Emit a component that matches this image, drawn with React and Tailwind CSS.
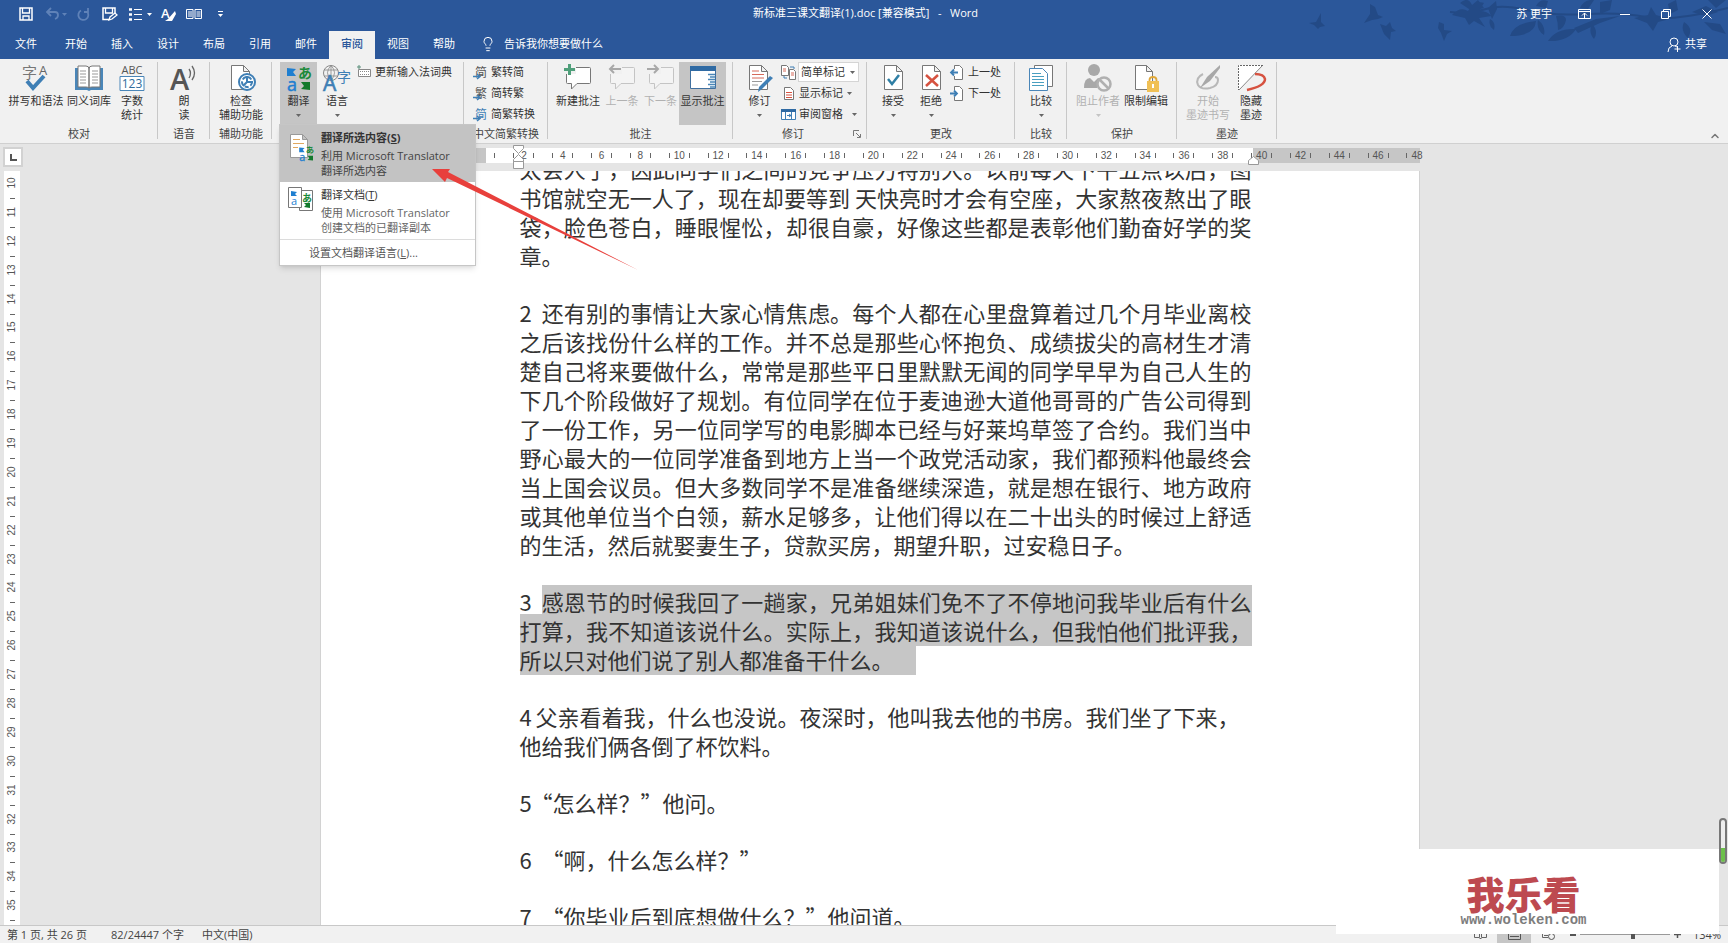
import { ChevronUp, Lightbulb } from 'lucide-react';

const TABS = ['文件', '开始', '插入', '设计', '布局', '引用', '邮件', '审阅', '视图', '帮助'];
const H_MARKS = Array.from({ length: 24 }, (_, i) => (i + 1) * 2);
const V_MARKS = Array.from({ length: 26 }, (_, i) => i + 10);

const Svg = ({ w = 28, h = 28, children, className = '' }) => (
  <svg width={w} height={h} viewBox={`0 0 ${w} ${h}`} fill="none" className={`shrink-0 overflow-visible ${className}`} aria-hidden="true">
    {children}
  </svg>
);

const Caret = ({ className = 'text-[#666]' }) => (
  <Svg w={5} h={3} className={className}>
    <path d="M0 0h5L2.5 3z" fill="currentColor" />
  </Svg>
);

/* ---------- large ribbon icons ---------- */

const SpellIcon = () => (
  <Svg>
    <text x="0" y="14" fontSize="15" fill="#777" fontFamily="Noto Sans CJK SC">字</text>
    <text x="17" y="11" fontSize="13" fill="#666" fontFamily="Open Sans">A</text>
    <path d="M5 17l6 7L22 12" stroke="#3f7fb5" strokeWidth="4" />
  </Svg>
);

const ThesaurusIcon = () => (
  <Svg>
    <path d="M0 4v22h12l2 1 2-1h12V4" fill="#4a86b8" />
    <path d="M3 2h8q3 0 3 3v19q-1-1-3-1H3zM25 2h-8q-3 0-3 3v19q1-1 3-1h8z" fill="#fff" stroke="#777" />
    <path d="M5 7h6M5 10h6M5 13h6M5 16h6M5 19h6M17 7h6M17 10h6M17 13h6M17 16h6M17 19h6" stroke="#999" />
  </Svg>
);

const CountIcon = () => (
  <Svg>
    <text x="14" y="10" fontSize="11" textAnchor="middle" fill="#555" fontFamily="Open Sans">ABC</text>
    <path d="M2 12.5h24v14H2z" fill="#fff" stroke="#4a86b8" />
    <text x="14" y="24" fontSize="12" textAnchor="middle" fill="#2f6c9c" fontFamily="Open Sans">123</text>
  </Svg>
);

const ReadIcon = () => (
  <Svg>
    <text x="0" y="26" fontSize="29" fontWeight="600" fill="#555" fontFamily="Open Sans">A</text>
    <path d="M19 5q3 4 0 9M22 2q5 7 0 14" stroke="#666" strokeWidth="1.3" />
  </Svg>
);

const PageShape = () => <path d="M5.5 1.5h12l6 6v18h-18zM17.5 1.5v6h6" fill="#fff" stroke="#777" />;

const AccessIcon = () => (
  <Svg>
    <path d="M4.5 1.5h12l6 6v18h-18zM16.5 1.5v6h6" fill="#fff" stroke="#777" />
    <circle cx="20" cy="18" r="8" fill="#fff" stroke="#3f7fb5" strokeWidth="2" />
    <circle cx="20" cy="18" r="5" stroke="#3f7fb5" strokeWidth="2" strokeDasharray="4 2" />
    <path d="M20 12v6h6M20 18l-4 4" stroke="#3f7fb5" strokeWidth="2" />
  </Svg>
);

const TranslateGlyph = () => (
  <>
    <path d="M2 4l9 1-3 3 3 4H2z" fill="#1f7fd0" />
    <text x="13" y="14" fontSize="14" fontWeight="700" fill="#1c8a3a" fontFamily="Noto Sans CJK JP">あ</text>
    <text x="2" y="27" fontSize="18" fill="#1f7fd0" stroke="#1f7fd0" strokeWidth="0.5" fontFamily="Open Sans">a</text>
    <path d="M25 26l-9-1 3-3-3-4h9z" fill="#127a2c" />
  </>
);

const TranslateIcon = () => <Svg><TranslateGlyph /></Svg>;

const LanguageIcon = () => (
  <Svg>
    <circle cx="8" cy="9" r="7.5" stroke="#888" />
    <path d="M8 1.5v15M1 6h14M1 12h14M8 1.5q-7 7 0 15M8 1.5q7 7 0 15" stroke="#888" strokeWidth="0.8" />
    <text x="14" y="18" fontSize="14" fill="#3f7fb5" fontFamily="Noto Sans CJK SC">字</text>
    <text x="0" y="27" fontSize="21" fill="#3f7fb5" stroke="#3f7fb5" strokeWidth="0.6" fontFamily="Open Sans">A</text>
  </Svg>
);

const bubble = 'M3.5 3.5h22q1 0 1 1v14q0 1-1 1H13L7.5 25v-5.5h-4q-1 0-1-1v-14q0-1 1-1z';

const NewCommentIcon = () => (
  <Svg>
    <path d={bubble} fill="#fff" stroke="#777" />
    <path d="M0 0h12v10H0z" fill="#f1f1f1" />
    <path d="M5.5 0v11M0 5.5h11" stroke="#4f9f7a" strokeWidth="3" />
  </Svg>
);

const StepCommentIcon = ({ next }) => (
  <Svg>
    <path d={bubble} fill="#f4f4f4" stroke="#c4c4c4" />
    <path d="M0 0h14v10H0z" fill="#f1f1f1" />
    {next
      ? <path d="M0 5h11M7 1l4 4-4 4" stroke="#a8a8a8" strokeWidth="2" />
      : <path d="M13 5H2M6 1L2 5l4 4" stroke="#a8a8a8" strokeWidth="2" />}
  </Svg>
);

const ShowCommentsIcon = () => (
  <Svg>
    <path d="M1.5 2.5h25v22h-25z" fill="#fff" stroke="#3f6f9f" />
    <path d="M1 2h26v5H1z" fill="#2f6aa3" />
    <path d="M19 10.5h7M19 15.5h7M19 20.5h7M21 13h5M21 18h5M21 23h5" stroke="#4a86b8" strokeWidth="1.5" />
  </Svg>
);

const ReviseIcon = () => (
  <Svg>
    <path d="M3.5 1.5h12l6 6v18h-18zM15.5 1.5v6h6" fill="#fff" stroke="#777" />
    <path d="M6 7h7M6 10.5h12M6 14h12" stroke="#d66a5a" />
    <path d="M6 17.5h10M6 21h6" stroke="#999" />
    <path d="M27 14L16 25l-4 3 1-5 11-11z" fill="#3f7fb5" />
  </Svg>
);

const AcceptIcon = () => (
  <Svg>
    <PageShape />
    <path d="M9 15l4 5 7-9" stroke="#2f7fa5" strokeWidth="2.5" />
  </Svg>
);

const RejectIcon = () => (
  <Svg>
    <PageShape />
    <path d="M9 11l12 11M21 11L9 22" stroke="#d65240" strokeWidth="2.5" />
  </Svg>
);

const CompareIcon = () => (
  <Svg>
    <path d="M7.5 1.5h18v21h-18z" fill="#fff" stroke="#777" />
    <path d="M2.5 4.5h13l5 5v17h-18z" fill="#fff" stroke="#4a86b8" />
    <path d="M5 9.5h9M5 12.5h12M5 15.5h12M5 18.5h12M5 21.5h12" stroke="#4a9fc0" />
  </Svg>
);

const BlockIcon = () => (
  <Svg>
    <circle cx="10" cy="6" r="6" fill="#a8a8a8" />
    <path d="M0 24q0-10 6-10l4 4 4-4 3 1-4 9z" fill="#a8a8a8" />
    <circle cx="20" cy="20" r="6.5" fill="#f1f1f1" stroke="#b0b0b0" strokeWidth="2.5" />
    <path d="M16 16l8 8" stroke="#b0b0b0" strokeWidth="2.5" />
  </Svg>
);

const RestrictIcon = () => (
  <Svg>
    <path d="M3.5 1.5h11l6 6v18h-17zM14.5 1.5v6h6" fill="#fff" stroke="#777" />
    <path d="M17.5 18v-2q0-3 3.5-3t3.5 3v2" stroke="#e0a83a" strokeWidth="1.8" />
    <path d="M15 17h12v11H15z" fill="#f0c055" />
    <path d="M21 20v4" stroke="#fff" strokeWidth="2" />
  </Svg>
);

const InkIcon = () => (
  <Svg>
    <path d="M9 10q-8 4-5 11 3 5 12 3 8-2 8-8 0-3-3-3" stroke="#b8b8b8" strokeWidth="2" />
    <path d="M26 1l-13 12-7 11 10-7L26 4z" fill="#a8a8a8" />
  </Svg>
);

const HideInkIcon = () => (
  <Svg>
    <path d="M1 1h25L2 26H1z" fill="#fff" />
    <path d="M26 1.5H1.5V26" stroke="#666" strokeDasharray="2 1" />
    <path d="M25 2L2 26" stroke="#888" />
    <path d="M18 10q9 0 10 5 0 7-18 11" stroke="#d65240" strokeWidth="2.5" />
  </Svg>
);

/* ---------- small ribbon icons ---------- */

const ConvertIcon = ({ char, color = '#555' }) => (
  <Svg w={15} h={15}>
    <text x="2" y="12" fontSize="12" fill={color} fontFamily="Noto Sans CJK SC">{char}</text>
    <path d="M0 11.5h6M4 9l3 2.5L4 14" stroke="#3f7fb5" strokeWidth="1.5" />
  </Svg>
);

const ImeIcon = () => (
  <Svg w={15} h={14}>
    <path d="M1.5 4.5h12v7h-12z" fill="#fff" stroke="#888" />
    <path d="M3 6.5h9M3 9.5h9" stroke="#888" strokeDasharray="1 1" />
    <path d="M2 0v4M0 2h4" stroke="#5a8f7a" />
  </Svg>
);

const MarkupIcon = () => (
  <Svg w={15} h={15}>
    <path d="M.5.5h5l2 2v8h-7zM8.5 4.5h4l2 2v8h-6z" fill="#fff" stroke="#777" />
    <path d="M2 4h3M2 6h3M10 8h3M10 10h3" stroke="#d66a5a" />
    <path d="M9 2h4v2M6 13H3v-2" stroke="#3f7fb5" />
  </Svg>
);

const ShowMarkupIcon = () => (
  <Svg w={15} h={15}>
    <path d="M3.5 1.5h6l3 3v9h-9z" fill="#fff" stroke="#777" />
    <path d="M5 6.5h6M5 9h6M5 11.5h6" stroke="#d65240" />
  </Svg>
);

const PaneIcon = () => (
  <Svg w={15} h={15}>
    <path d="M.5 2.5h14v10H.5z" fill="#fff" stroke="#3f7fb5" />
    <path d="M0 2h15v3H0z" fill="#2f6aa3" />
    <path d="M4.5 5v7M10.5 5v7M6 8.5h4M8 7l2 1.5L8 10" stroke="#3f7fb5" />
  </Svg>
);

const StepChangeIcon = ({ next }) => (
  <Svg w={15} h={15}>
    <path d="M4.5 4V.5h5l3 3v11h-8V11" fill="#fff" stroke="#777" />
    {next
      ? <path d="M0 7.5h7M4 4.5l3 3-3 3" stroke="#3f7fb5" strokeWidth="1.8" />
      : <path d="M8 7.5H1M4 4.5l-3 3 3 3" stroke="#3f7fb5" strokeWidth="1.8" />}
  </Svg>
);

/* ---------- ribbon building blocks ---------- */

const BigButton = ({ icon, lines, width, caret, active, disabled }) => (
  <button
    type="button"
    disabled={disabled}
    className={`${width} flex h-full flex-col items-center whitespace-nowrap pt-[2px] leading-[14px] ${active ? 'bg-[#c5c5c5]' : ''} ${disabled ? 'text-[#b1b1b1]' : ''}`}
  >
    {icon}
    <span className="mt-[2px]">{lines[0]}</span>
    {lines[1] && <span>{lines[1]}</span>}
    {caret && <Caret className={`mt-[6px] ${disabled ? 'text-[#c4c4c4]' : 'text-[#666]'}`} />}
  </button>
);

const SmallButton = ({ icon, label, caret }) => (
  <button type="button" className="flex h-[20px] items-center gap-[3px] whitespace-nowrap">
    {icon}
    <span>{label}</span>
    {caret && <Caret className={caret} />}
  </button>
);

const SmallStack = ({ className = '', children }) => (
  <div className={`flex flex-col items-start gap-px ${className}`}>{children}</div>
);

const Group = ({ label, width, pad = '', children, launcher }) => (
  <section className={`${width} relative flex h-full shrink-0 flex-col pt-[3px]`}>
    <div className={`flex h-[63px] ${pad}`}>{children}</div>
    <div className="mt-[1px] flex h-[16px] items-center">
      <span className="flex-1 whitespace-nowrap text-center text-[#444]">{label}</span>
      {launcher && (
        <button type="button" aria-label="修订选项" className="w-[14px]">
          <Svg w={8} h={8}>
            <path d="M.5 6V.5H6M3 3l4 4M7.5 4v3.5H4" stroke="#777" />
          </Svg>
        </button>
      )}
    </div>
    <span className="absolute right-0 top-[3px] h-[77px] w-px bg-[#c8c8c8]" />
  </section>
);

const TranslateMenu = () => (
  <div role="menu" className="absolute left-[7px] top-[65px] z-20 w-[197px] border border-[#c6c6c6] bg-white text-[#444] shadow-md">
    <button type="button" role="menuitem" className="flex w-full gap-[6px] bg-[#c3c3c3] pb-[4px] pl-[9px] pt-[5px] text-left">
      <Svg w={26} h={28} className="mt-[3px]">
        <path d="M1.5 1.5h12l5 5v18h-17zM13.5 1.5v5h5" fill="#fff" stroke="#999" />
        <path d="M4 6.5h7M4 10.5h11M4 14.5h5" stroke="#e0a860" />
        <g transform="translate(9 12) scale(.6)"><TranslateGlyph /></g>
      </Svg>
      <span className="flex flex-col whitespace-nowrap leading-[15px]">
        <b className="mb-[2px] leading-[16px] text-[#333]">翻译所选内容(<u>S</u>)</b>
        <span>利用 Microsoft Translator</span>
        <span>翻译所选内容</span>
      </span>
    </button>
    <button type="button" role="menuitem" className="mt-[1px] flex w-full gap-[6px] pb-[4px] pl-[7px] pt-[4px] text-left text-[#666]">
      <Svg w={28} h={28}>
        <path d="M12.5 3.5h13v20h-13z" fill="#fff" stroke="#777" />
        <path d="M1.5.5h13v20h-13z" fill="#fff" stroke="#777" />
        <path d="M4 4l6 1-2 2 2 2H4z" fill="#1f7fd0" />
        <text x="4" y="18" fontSize="11" fill="#1f7fd0" fontFamily="Open Sans">a</text>
        <text x="15" y="15" fontSize="10" fontWeight="700" fill="#1c8a3a" fontFamily="Noto Sans CJK JP">あ</text>
        <path d="M23 21l-6-1 2-2-2-2h6z" fill="#127a2c" />
      </Svg>
      <span className="flex flex-col whitespace-nowrap leading-[15px]">
        <span className="mb-[2px] leading-[16px] text-[#333]">翻译文档(<u>T</u>)</span>
        <span>使用 Microsoft Translator</span>
        <span>创建文档的已翻译副本</span>
      </span>
    </button>
    <button type="button" role="menuitem" className="h-[26px] w-full border-t border-[#dcdcdc] pl-[29px] text-left text-[#555]">
      设置文档翻译语言(<u>L</u>)...
    </button>
    <Svg w={212} h={106} className="absolute left-[150px] top-[41px]">
      <path d="M2 3h18l-2 3 190 98L17 12l-2 4z" fill="#e8403c" />
    </Svg>
  </div>
);

/* ---------- window frame ---------- */

const IconButton = ({ label, children, className = '' }) => (
  <button type="button" aria-label={label} className={`flex h-[20px] items-center justify-center ${className}`}>
    {children}
  </button>
);

const HeaderArt = () => (
  <svg width="428" height="58" viewBox="0 0 428 58" className="absolute right-0 top-0" fill="#234a86" aria-hidden="true">
    <path d="M9 23l7-1 5-9 0 9 4 4-5 1-2 2-4-4zM64 23l6-9 0-10 5 3 3 8 5 2-5 2-6 1zM80 24l6 2 4-4 2 6 4 3-5 1-1 8-6-6zM139 22l5 2 0 6 8 1-5 3-3 7-3-8-3-5z" />
    <path d="M150 12q20 2 36-3t40 1 60 4 60 3 82-9" stroke="#234a86" strokeWidth="2" fill="none" />
    <path d="M152 15q8-9 16-4 7-11 16-8l-5 8q9 0 12 5l-12 2 6 9-11-6-5 4-4-7zM160 3q8-7 12 2l6-5 6 8-12 3zM188 8l8-7 1 8-5 10zM190 19q6 3 4 11-6-4-4-11z" />
    <path d="M210 36q4-13 26-15-1 15-26 15zM238 20q8 6 6 15-8-5-6-15zM256 16q10-2 10 4-2 9-8 10 0-8-2-14zM248 41q8-13 28-12-8 13-28 12zM274 28l22-9 24-3-20 7-22 10zM292 24q7 7 2 15-6-7-2-15z" />
    <path d="M236 6q4-8 12-5l-2 7zM280 8q4-9 14-8l-6 9zM300 2l12-2-2 10-10 4zM334 18l14-3 3-8 5 8 14 4-12 3-5 9-6-8zM368 4l8-4 2 10-8 4zM384 22q10 6 4 16-8-7-4-16zM392 12l14-6 12 6-12 4zM404 22l16 2 6 10-14-4zM408 0h18l-10 8z" />
  </svg>
);

const TitleBar = () => (
  <header className="relative h-[59px] shrink-0 bg-[#2b579a] text-white">
    <HeaderArt />
    <div className="relative flex h-[31px] items-start pt-[4px]">
      <div className="flex flex-1 items-center pl-[18px]">
        <IconButton label="保存" className="w-[16px]">
          <Svg w={14} h={14}>
            <path d="M1 1h12v12H1z" stroke="#fff" strokeWidth="1.5" />
            <path d="M3.5 1v5h7V1M4 13V9h6v4" stroke="#fff" strokeWidth="1.3" />
          </Svg>
        </IconButton>
        <IconButton label="撤消" className="ml-[10px] w-[24px] gap-[3px] text-[#5f82b8]">
          <Svg w={13} h={12}>
            <path d="M1 4h8q3 0 3 3t-3 4M5 0L1 4l4 4" stroke="currentColor" strokeWidth="1.8" />
          </Svg>
          <Caret className="text-[#5f82b8]" />
        </IconButton>
        <IconButton label="重复" className="ml-[7px] w-[16px] text-[#5f82b8]">
          <Svg w={13} h={13}>
            <path d="M4 2.5a5 5 0 1 0 6 1M11 0v4H7" stroke="currentColor" strokeWidth="1.8" />
          </Svg>
        </IconButton>
        <IconButton label="另存为" className="ml-[10px] w-[16px]">
          <Svg w={15} h={14}>
            <path d="M7 12.5H1V1h12v5" stroke="#fff" strokeWidth="1.5" />
            <path d="M3.5 1v5h7V1M7 13l1-3 5-4 2 2-5 4z" stroke="#fff" strokeWidth="1.3" />
          </Svg>
        </IconButton>
        <IconButton label="项目符号" className="ml-[11px] w-[24px] gap-[5px]">
          <Svg w={13} h={13}>
            <path d="M0 1.5h3M0 6.5h3M0 11.5h3" stroke="#fff" strokeWidth="2.5" />
            <path d="M5 1.5h8M5 6.5h8M5 11.5h8" stroke="#fff" />
          </Svg>
          <Caret className="text-white" />
        </IconButton>
        <IconButton label="样式" className="ml-[8px] w-[16px]">
          <Svg w={15} h={15}>
            <text x="0" y="11" fontSize="13" fontWeight="600" fill="#fff" fontFamily="Open Sans">A</text>
            <path d="M14 4L7 12l-3 2h7l4-7z" fill="#fff" />
          </Svg>
        </IconButton>
        <IconButton label="阅读" className="ml-[9px] w-[17px]">
          <Svg w={16} h={12}>
            <path d="M.5 1.5h6.5v9H.5zM9 1.5h6.5v9H9z" stroke="#fff" />
            <path d="M2 4h4M2 6h4M2 8h4M10.5 4h4M10.5 6h4M10.5 8h4" stroke="#fff" />
          </Svg>
        </IconButton>
        <IconButton label="自定义快速访问工具栏" className="ml-[10px] w-[16px]">
          <Svg w={5} h={7}>
            <path d="M0 .5h5" stroke="#fff" />
            <path d="M0 3h5L2.5 6z" fill="#fff" />
          </Svg>
        </IconButton>
      </div>
      <h1 className="whitespace-pre leading-[18px]">新标准三课文翻译(1).doc [兼容模式]   -   Word</h1>
      <div className="flex flex-1 items-center justify-end pr-[15px]">
        <span className="mr-[25px] leading-[18px]">苏 更宇</span>
        <IconButton label="功能区显示选项" className="w-[14px]">
          <Svg w={13} h={10}>
            <path d="M.5.5h12v9H.5zM0 2.5h13M6.5 9V4M4 6.5L6.5 4 9 6.5" stroke="#fff" />
          </Svg>
        </IconButton>
        <IconButton label="最小化" className="ml-[28px] w-[12px]">
          <span className="h-px w-[10px] bg-white" />
        </IconButton>
        <IconButton label="还原" className="ml-[28px] w-[14px]">
          <Svg w={11} h={11}>
            <path d="M.5 2.5h7v7h-7zM2.5 2.5v-2h7v7h-2" stroke="#fff" />
          </Svg>
        </IconButton>
        <IconButton label="关闭" className="ml-[28px] w-[12px]">
          <Svg w={10} h={10}>
            <path d="M.5.5l9 9M9.5.5l-9 9" stroke="#fff" />
          </Svg>
        </IconButton>
      </div>
    </div>
    <nav className="relative flex h-[28px] items-stretch pl-[3px]">
      {TABS.map((t) => (
        <button
          key={t}
          type="button"
          className={`w-[46px] pb-[2px] first:mr-[4px] ${t === '审阅' ? 'bg-[#f1f1f1] font-medium text-[#2b579a]' : ''}`}
        >
          {t}
        </button>
      ))}
      <button type="button" className="ml-[13px] flex items-center gap-[8px] pb-[2px]">
        <Lightbulb size={16} strokeWidth={1.5} />
        告诉我你想要做什么
      </button>
      <button type="button" className="ml-auto mr-[21px] flex items-center gap-[4px] pb-[2px]">
        <Svg w={14} h={15}>
          <circle cx="7" cy="5" r="4" stroke="#fff" />
          <path d="M1 15q0-5 4-6M8 9l2 1M10.5 9v6M7.5 12h6" stroke="#fff" />
        </Svg>
        共享
      </button>
    </nav>
  </header>
);

const Ribbon = () => (
  <div className="relative z-10 flex h-[85px] shrink-0 border-b border-[#d0d0d0] bg-[#f1f1f1] text-[#333]">
    <Group label="校对" width="w-[158px]" pad="pl-[5px]">
      <BigButton width="w-[62px]" icon={<SpellIcon />} lines={['拼写和语法']} />
      <BigButton width="w-[44px]" icon={<ThesaurusIcon />} lines={['同义词库']} />
      <BigButton width="w-[42px]" icon={<CountIcon />} lines={['字数', '统计']} />
    </Group>
    <Group label="语音" width="w-[52px]">
      <BigButton width="w-full" icon={<ReadIcon />} lines={['朗', '读']} />
    </Group>
    <Group label="辅助功能" width="w-[62px]">
      <BigButton width="w-full" icon={<AccessIcon />} lines={['检查', '辅助功能']} />
    </Group>
    <Group width="w-[192px]" pad="pl-[8px]">
      <BigButton width="w-[37px]" icon={<TranslateIcon />} lines={['翻译']} caret active />
      <BigButton width="w-[40px]" icon={<LanguageIcon />} lines={['语言']} caret />
      <SmallStack>
        <SmallButton icon={<ImeIcon />} label="更新输入法词典" />
      </SmallStack>
      <TranslateMenu />
    </Group>
    <Group label="中文简繁转换" width="w-[84px]" pad="pl-[9px]">
      <SmallStack>
        <SmallButton icon={<ConvertIcon char="简" />} label="繁转简" />
        <SmallButton icon={<ConvertIcon char="繁" />} label="简转繁" />
        <SmallButton icon={<ConvertIcon char="简" color="#3f7fb5" />} label="简繁转换" />
      </SmallStack>
    </Group>
    <Group label="批注" width="w-[185px]" pad="pl-[6px]">
      <BigButton width="w-[48px]" icon={<NewCommentIcon />} lines={['新建批注']} />
      <BigButton width="w-[40px]" icon={<StepCommentIcon />} lines={['上一条']} disabled />
      <BigButton width="w-[37px]" icon={<StepCommentIcon next />} lines={['下一条']} disabled />
      <BigButton width="w-[47px]" icon={<ShowCommentsIcon />} lines={['显示批注']} active />
    </Group>
    <Group label="修订" width="w-[134px]" pad="pl-[5px]" launcher>
      <BigButton width="w-[43px]" icon={<ReviseIcon />} lines={['修订']} caret />
      <SmallStack>
        <div className="flex h-[20px] items-center gap-[2px]">
          <MarkupIcon />
          <div className="relative">
            <select aria-label="显示以供审阅" className="h-[20px] w-[61px] appearance-none border border-[#d5d5d5] bg-white pl-[2px]">
              <option>简单标记</option>
            </select>
            <Caret className="pointer-events-none absolute right-[4px] top-[9px] text-[#666]" />
          </div>
        </div>
        <SmallButton icon={<ShowMarkupIcon />} label="显示标记" caret="ml-[1px] text-[#666]" />
        <SmallButton icon={<PaneIcon />} label="审阅窗格" caret="ml-[6px] text-[#666]" />
      </SmallStack>
    </Group>
    <Group label="更改" width="w-[148px]" pad="pl-[7px]">
      <BigButton width="w-[38px]" icon={<AcceptIcon />} lines={['接受']} caret />
      <BigButton width="w-[38px]" icon={<RejectIcon />} lines={['拒绝']} caret />
      <SmallStack>
        <SmallButton icon={<StepChangeIcon />} label="上一处" />
        <SmallButton icon={<StepChangeIcon next />} label="下一处" />
      </SmallStack>
    </Group>
    <Group label="比较" width="w-[52px]">
      <BigButton width="w-full" icon={<CompareIcon />} lines={['比较']} caret />
    </Group>
    <Group label="保护" width="w-[110px]" pad="pl-[7px]">
      <BigButton width="w-[48px]" icon={<BlockIcon />} lines={['阻止作者']} caret disabled />
      <BigButton width="w-[48px]" icon={<RestrictIcon />} lines={['限制编辑']} />
    </Group>
    <Group label="墨迹" width="w-[100px]" pad="pl-[7px]">
      <BigButton width="w-[48px]" icon={<InkIcon />} lines={['开始', '墨迹书写']} disabled />
      <BigButton width="w-[38px]" icon={<HideInkIcon />} lines={['隐藏', '墨迹']} />
    </Group>
    <button type="button" aria-label="折叠功能区" className="mb-[1px] ml-auto mr-[7px] self-end">
      <ChevronUp size={12} strokeWidth={3} className="text-[#777]" />
    </button>
  </div>
);

/* ---------- rulers ---------- */

const HorizontalRuler = () => (
  <div className="relative mx-auto mt-[4px] h-[15px] w-[1100px] font-['Liberation_Sans',sans-serif] text-[10px] leading-[15px] text-[#555]">
    <div className="absolute inset-0 flex">
      <span className="w-[166px] bg-[#c6c6c6]" />
      <span className="flex-1 bg-white" />
      <span className="w-[167px] bg-[#c6c6c6]" />
    </div>
    <div className="relative -mr-[17px] flex pl-[174px]">
      <span className="my-[5px] w-[11px] border-l border-[#666]" />
      {H_MARKS.map((n) => (
        <span key={n} className="flex flex-1 items-center justify-center">
          <i className="h-[5px] w-px bg-[#666]" />
          <span className="w-[19px] text-center">{n}</span>
          <i className={`h-[5px] w-px ${n < 48 ? 'bg-[#666]' : ''}`} />
        </span>
      ))}
    </div>
    <Svg w={11} h={25} className="absolute left-[193px] top-[-3px]">
      <path d="M.5.5h10v3l-5 5-5-5zM5.5 9.5l5 5v2H.5v-2zM.5 16.5h10v7H.5z" fill="#fff" stroke="#999" />
    </Svg>
    <Svg w={11} h={9} className="absolute left-[928px] top-[8px]">
      <path d="M5.5.5l5 4v4H.5v-4z" fill="#fff" stroke="#999" />
    </Svg>
  </div>
);

const VerticalRuler = () => (
  <div className="flex w-[16px] flex-col bg-white pb-[3px] font-['Liberation_Sans',sans-serif] text-[10px] text-[#555]">
    {V_MARKS.map((n) => (
      <div key={n} className="flex flex-1 flex-col items-center">
        <span className="flex h-[24px] items-center justify-center">
          <span className="-rotate-90">{n}</span>
        </span>
        <i className="mt-[3px] h-px w-[5px] bg-[#666]" />
      </div>
    ))}
  </div>
);

/* ---------- document ---------- */

const Num = ({ children, width = 'w-[22px]' }) => <span className={`inline-block ${width}`}>{children}</span>;

const Page = () => (
  <article
    lang="zh-CN"
    className="mx-auto h-full w-[1100px] overflow-hidden border-x border-[#d2d2d2] bg-white pl-[199px] pr-[167px] font-['Noto_Sans_CJK_SC',sans-serif] text-[22px] leading-[29px] text-[#333]"
  >
    <div className="-mt-[17px] flex flex-col gap-[28px]">
      <p className="text-justify">
        太会人了，因此同学们之间的竞争压力特别大。以前每天下午五点以后，图书馆就空无一人了，现在却要等到 天快亮时才会有空座，大家熬夜熬出了眼袋，脸色苍白，睡眼惺忪，却很自豪，好像这些都是表彰他们勤奋好学的奖章。
      </p>
      <p className="text-justify">
        <Num>2</Num>还有别的事情让大家心情焦虑。每个人都在心里盘算着过几个月毕业离校之后该找份什么样的工作。并不总是那些心怀抱负、成绩拔尖的高材生才清楚自己将来要做什么，常常是那些平日里默默无闻的同学早早为自己人生的下几个阶段做好了规划。有位同学在位于麦迪逊大道他哥哥的广告公司得到了一份工作，另一位同学写的电影脚本已经与好莱坞草签了合约。我们当中野心最大的一位同学准备到地方上当一个政党活动家，我们都预料他最终会当上国会议员。但大多数同学不是准备继续深造，就是想在银行、地方政府或其他单位当个白领，薪水足够多，让他们得以在二十出头的时候过上舒适的生活，然后就娶妻生子，贷款买房，期望升职，过安稳日子。
      </p>
      <p className="text-justify">
        <Num>3</Num>
        <mark className="bg-[#c6c6c6] pr-[22px] text-inherit">
          感恩节的时候我回了一趟家，兄弟姐妹们免不了不停地问我毕业后有什么打算，我不知道该说什么。实际上，我知道该说什么，但我怕他们批评我，所以只对他们说了别人都准备干什么。
        </mark>
      </p>
      <p>
        <Num width="w-[16px]">4</Num>父亲看着我，什么也没说。夜深时，他叫我去他的书房。我们坐了下来，他给我们俩各倒了杯饮料。
      </p>
      <p><Num width="w-[11px]">5</Num>“怎么样？”他问。</p>
      <p><Num>6</Num>“啊，什么怎么样？”</p>
      <p><Num>7</Num>“你毕业后到底想做什么？”他问道。</p>
    </div>
  </article>
);

const StatusBar = () => (
  <footer className="flex h-[18px] shrink-0 items-center border-t border-[#c8c8c8] bg-[#f1f1f1] pl-[7px] pr-[7px] text-[#444]">
    <span>第 1 页, 共 26 页</span>
    <span className="ml-[24px]">82/24447 个字</span>
    <span className="ml-[18px]">中文(中国)</span>
    <button type="button" aria-label="阅读视图" className="ml-auto">
      <Svg w={13} h={10}><path d="M.5 1.5h5v6h-5zM7.5 1.5h5v6h-5zM5.5 8.5h2" stroke="#666" /></Svg>
    </button>
    <button type="button" aria-label="页面视图" className="ml-[10px] flex h-full w-[34px] items-center justify-center bg-[#c6c6c6]">
      <Svg w={13} h={10}><path d="M.5.5h12v9H.5zM2 3.5h9M2 6.5h9" stroke="#555" /></Svg>
    </button>
    <button type="button" aria-label="Web 版式视图" className="ml-[11px]">
      <Svg w={13} h={11}>
        <path d="M6 8.5H.5v-7h10V5M2 3.5h7M2 6.5h4" stroke="#666" />
        <circle cx="9.500" cy="7.5" r="3" stroke="#555" />
      </Svg>
    </button>
    <button type="button" aria-label="缩小" className="ml-[15px] h-[2px] w-[6px] bg-[#555]" />
    <input
      type="range"
      aria-label="显示比例"
      min="10"
      max="190"
      defaultValue="116"
      className="mx-[4px] h-px w-[90px] appearance-none bg-[#999] [&::-webkit-slider-thumb]:h-[9px] [&::-webkit-slider-thumb]:w-[4px] [&::-webkit-slider-thumb]:appearance-none [&::-webkit-slider-thumb]:bg-[#555]"
    />
    <button type="button" aria-label="放大">
      <Svg w={7} h={7}><path d="M0 3.5h7M3.5 0v7" stroke="#555" strokeWidth="1.5" /></Svg>
    </button>
    <span className="ml-[12px]">134%</span>
  </footer>
);

export default function App() {
  return (
    <div className="relative flex h-screen flex-col overflow-hidden bg-[#e5e5e5] font-['Open_Sans','Noto_Sans_CJK_SC',sans-serif] text-[11px] leading-[14px]">
      <TitleBar />
      <Ribbon />
      <div className="flex h-[27px] shrink-0">
        <div className="ml-[3px] mt-[3px] flex h-[20px] w-[20px] items-center justify-center border-2 border-[#d2d2d2] bg-white">
          <Svg w={7} h={7}><path d="M1 0v6h6" stroke="#555" strokeWidth="2" /></Svg>
        </div>
        <div className="min-w-0 flex-1 pr-[12px]"><HorizontalRuler /></div>
      </div>
      <main className="flex min-h-0 flex-1 pl-[4px]">
        <VerticalRuler />
        <div className="min-w-0 flex-1"><Page /></div>
        <div className="flex w-[9px] flex-col justify-end pb-[61px]">
          <div className="flex h-[46px] w-[8px] flex-col justify-end rounded-full border-2 border-[#777] bg-[#eee]">
            <span className="h-[14px] rounded-b-full bg-[#6cc04a]" />
          </div>
        </div>
      </main>
      <StatusBar />
      <aside className="absolute bottom-[9px] right-[9px] flex h-[85px] w-[383px] flex-col items-center bg-white pr-[8px] pt-[25px]">
        <strong className="font-['Noto_Sans_CJK_SC',sans-serif] text-[38px] font-black leading-[38px] text-[#bd4a50]">我乐看</strong>
        <span className="font-['Liberation_Mono',monospace] text-[14px] font-bold leading-[16px] text-[#7d7d7d]">www.woleken.com</span>
      </aside>
    </div>
  );
}
